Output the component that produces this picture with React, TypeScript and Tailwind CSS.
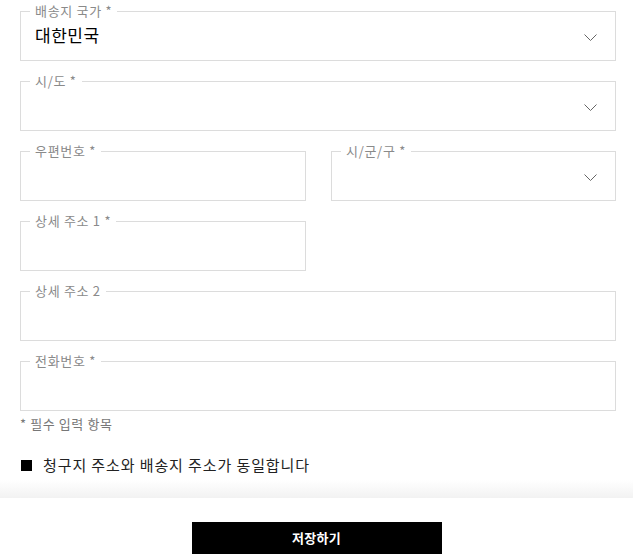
const font = { fontFamily: '"Noto Sans CJK KR", "Noto Sans", sans-serif' };

const Chevron = () => (
  <svg width="13" height="7" viewBox="0 0 13 7" fill="none" className="shrink-0 mt-[5px]">
    <path d="M0.5 0.5L6.5 6.5L12.5 0.5" stroke="#666" strokeWidth="1" />
  </svg>
);

type FieldProps = {
  label: string;
  value?: string;
  select?: boolean;
  className?: string;
};

const Field = ({ label, value, select, className = "" }: FieldProps) => (
  <fieldset className={`border border-[#dcdcdc] h-[57px] pl-[14px] pr-[18px] ${className}`}>
    <legend className="ml-[-5px] px-[5px] text-[13px] leading-[14px] tracking-[0.7px] text-[#8a8a8a]">{label}</legend>
    <div className="flex items-center justify-between w-full h-[34px]">
      <span className="text-[17px] tracking-[0.5px] text-black">{value}</span>
      {select && <Chevron />}
    </div>
  </fieldset>
);

export default function App() {
  return (
    <div className="w-[633px] h-[557px] bg-white flex flex-col overflow-hidden" style={font}>
      <div className="flex flex-col gap-[13px] pl-[20px] pr-[17px] pt-[4px]">
        <Field label="배송지 국가 *" value="대한민국" select />
        <Field label="시/도 *" select />
        <div className="flex gap-[25px]">
          <Field label="우편번호 *" className="w-[286px]" />
          <Field label="시/군/구 *" select className="flex-1" />
        </div>
        <div className="flex">
          <Field label="상세 주소 1 *" className="w-[286px]" />
        </div>
        <Field label="상세 주소 2" />
        <Field label="전화번호 *" />
      </div>
      <p className="pl-[20px] mt-[4px] text-[13px] leading-[18px] tracking-[0.6px] text-[#777]">* 필수 입력 항목</p>
      <label className="flex items-center gap-[11px] pl-[21px] mt-[22px]">
        <span className="w-[11px] h-[11px] bg-black" />
        <span className="text-[15px] leading-[20px] tracking-[0.9px] text-[#222]">청구지 주소와 배송지 주소가 동일합니다</span>
      </label>
      <div className="h-[18px] mt-[5px] bg-gradient-to-b from-white to-[#f2f2f2]" />
      <div className="flex justify-center pt-[24px]">
        <button className="w-[250px] h-[32px] bg-black text-white text-[13px] tracking-[0.3px] font-bold">저장하기</button>
      </div>
    </div>
  );
}
